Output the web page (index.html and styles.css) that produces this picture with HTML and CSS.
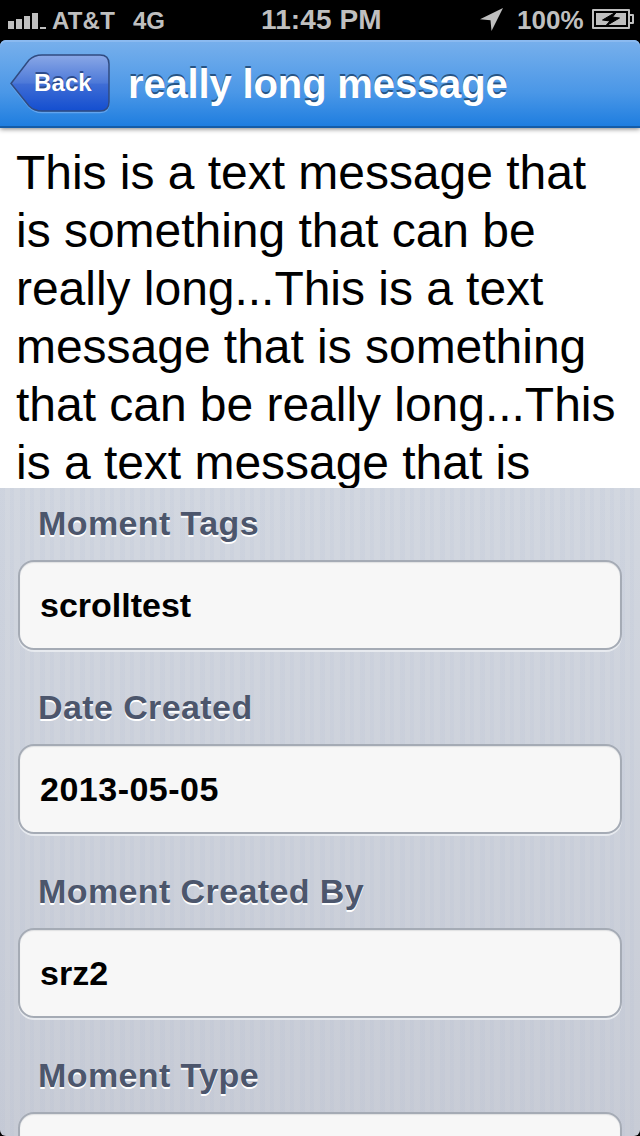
FILE: index.html
```html
<!DOCTYPE html>
<html lang="en">
<head>
<meta charset="utf-8">
<title>really long message</title>
<link rel="stylesheet" href="styles.css">
</head>
<body>
<div class="screen">
  <header class="status">
    <svg class="signal" width="38" height="17" viewBox="0 0 38 17" shape-rendering="crispEdges"><path d="M0 8h6v8H0zM8 6h6v10H8zM16 3h6v13h-6zM24 0h6v16h-6zM32 14h6v2h-6z"/></svg>
    <span class="carrier">AT&amp;T</span>
    <span class="network">4G</span>
    <span class="time">11:45 PM</span>
    <svg class="location" width="23" height="23" viewBox="0 0 23 23"><path d="M23 0 11.5 23 10.5 12.2 0 11.3Z"/></svg>
    <span class="percent">100%</span>
    <svg class="battery" width="42" height="20" viewBox="0 0 42 20"><path fill-rule="evenodd" d="M1 0H37Q38 0 38 1V5H41Q42 5 42 6V14Q42 15 41 15H38V19Q38 20 37 20H1Q0 20 0 19V1Q0 0 1 0ZM2 2V18H36V2ZM38 7V13H40V7Z"/><path d="M4 4H34V16H4Z"/><path class="bolt" d="M25 2.5 10.5 11 18 12 13 17.5 27.5 9 20.5 8Z"/></svg>
  </header>
  <nav class="navbar">
    <a class="back">
      <svg class="back-shape" width="102" height="62" viewBox="0 0 102 62">
        <defs><linearGradient id="back-fill" x1="0" y1="0" x2="0" y2="1"><stop offset="0" stop-color="#8aa8e6"/><stop offset=".5" stop-color="#4d79d8"/><stop offset=".52" stop-color="#3f6dd5"/><stop offset="1" stop-color="#134ed0"/></linearGradient></defs>
        <path class="back-glow" d="M1 32 19 8Q24 3 32 3H90Q99 3 99 12V50Q99 59.500 90 59.500H32Q24 59.500 19 54Z"/>
        <path class="back-body" d="M1 30.500 19 7Q24 2 32 2H90Q99 2 99 11V49Q99 58 90 58H32Q24 58 19 53Z"/>
      </svg>
      <span class="back-label">Back</span>
    </a>
    <h1 class="title">really long message</h1>
  </nav>
  <div class="message">
    <p class="line">This is a text message that</p>
    <p class="line">is something that can be</p>
    <p class="line">really long...This is a text</p>
    <p class="line">message that is something</p>
    <p class="line">that can be really long...This</p>
    <p class="line">is a text message that is</p>
  </div>
  <main class="details">
    <section class="group"><h2 class="label">Moment Tags</h2><div class="field">scrolltest</div></section>
    <section class="group"><h2 class="label">Date Created</h2><div class="field date">2013-05-05</div></section>
    <section class="group"><h2 class="label">Moment Created By</h2><div class="field">srz2</div></section>
    <section class="group"><h2 class="label">Moment Type</h2><div class="field"></div></section>
  </main>
</div>
</body>
</html>
```
FILE: styles.css
```css
* { box-sizing: border-box; margin: 0; padding: 0; }
body { background: #000; font-family: "Liberation Sans", Arial, sans-serif; }
.screen { width: 640px; height: 1136px; overflow: hidden; display: flex; flex-direction: column; border-radius: 0 0 6px 6px; }
.status { height: 40px; flex: none; display: flex; align-items: center; color: #bfbfbf; fill: #bfbfbf; font-weight: bold; white-space: nowrap; }
.signal { margin: 3px 0 0 8px; }
.carrier { margin: 1px 0 0 6px; width: 81px; font-size: 24px; letter-spacing: 0.2px; }
.network { margin-top: 1px; width: 128px; font-size: 24px; }
.time { width: 219px; font-size: 28px; letter-spacing: 0.1px; }
.location { margin-top: -1px; }
.percent { margin-left: 14px; width: 75px; font-size: 26px; }
.battery { margin-top: -2px; }
.bolt { stroke: #000; stroke-width: 1; fill: #000; }
.navbar { height: 88px; flex: none; display: flex; padding: 13px 0 0 10px; border-radius: 6px 6px 0 0; background: linear-gradient(#78b0ec, #4a97e7 60%, #1c7cdf); box-shadow: inset 0 2px 0 #8bbaf0, inset 0 -2px 0 #145ca8, 0 1px 5px rgba(0,0,0,.5); z-index: 1; }
.back { width: 102px; height: 62px; display: grid; }
.back > * { grid-area: 1 / 1; }
.back-body { fill: url(#back-fill); stroke: #304b80; stroke-width: 1.5; }
.back-glow { fill: none; stroke: #62a4ee; stroke-width: 1.5; }
.back-label { padding: 16px 0 0 24px; color: #fff; font-size: 24px; line-height: 28px; font-weight: bold; letter-spacing: 0.1px; text-shadow: 0 -2px 0 #2d4c8c; }
.title { margin: 8px 0 0 16px; color: #fff; font-size: 40px; line-height: 46px; letter-spacing: -0.15px; white-space: nowrap; text-shadow: 0 -2px 0 #275484; }
.message { height: 360px; flex: none; padding: 16px 0 0 16px; background: #fff; overflow: hidden; }
.line { font-size: 48px; line-height: 58px; letter-spacing: -0.03px; white-space: nowrap; }
.details { flex: 1; overflow: hidden; background: repeating-linear-gradient(90deg, rgba(155,170,205,.08) 0 5px, transparent 5px 10px, rgba(155,170,205,.08) 10px 14px, transparent 14px 20px), linear-gradient(#d2d7e0, #c8ccd6); }
.group { height: 184px; padding: 0 18px; }
.label { height: 72px; padding: 15px 0 0 20px; color: #4c566c; font-size: 34px; line-height: 40px; letter-spacing: 0.4px; text-shadow: 0 2px 0 #fff; white-space: nowrap; }
.field { height: 90px; padding: 0 20px; border: 2px solid #a5abb5; border-radius: 16px; background: #f7f7f7; box-shadow: 0 2px 0 #e7eaef, inset 0 1px 1px #dfe0e2; font-size: 34px; line-height: 86px; font-weight: bold; }
.date { letter-spacing: 0.5px; }
```
